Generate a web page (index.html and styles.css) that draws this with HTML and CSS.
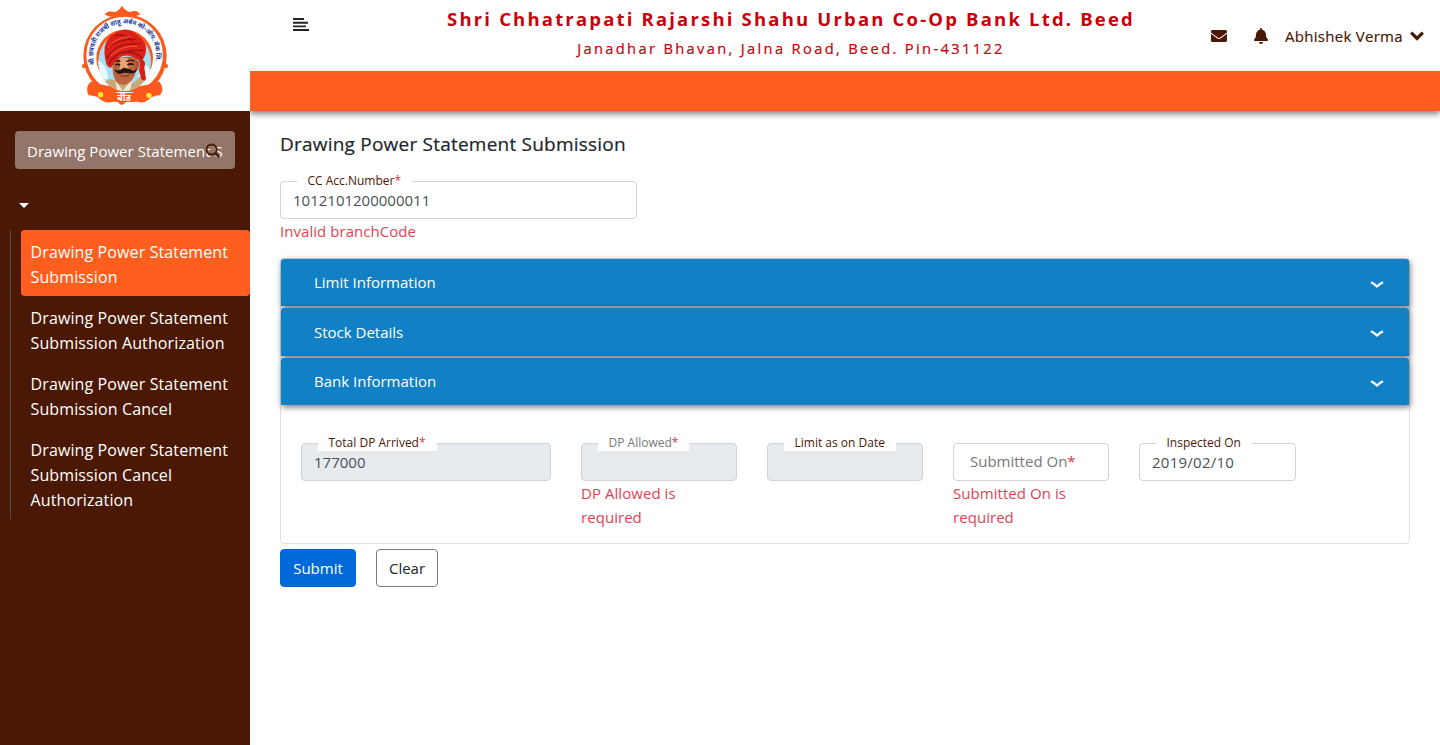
FILE: index.html
```html
<!DOCTYPE html>
<html lang="en">
<head>
<meta charset="utf-8">
<title>Drawing Power Statement Submission</title>
<link rel="stylesheet" href="styles.css">
</head>
<body>
<div class="app">
  <aside class="sidebar">
    <div class="brand">
      <svg class="logo" viewBox="0 0 330 336" width="110" height="112">
        <g fill="#fb5a1c">
          <path d="M104 44 Q112 30 134 36 Q148 32 156 17 Q164 32 180 36 Q204 28 210 44 L190 50 H122Z"/>
          <circle cx="165" cy="168" r="125"/>
          <path d="M62 245 Q44 262 56 286 Q84 288 90 298 Q106 312 130 305 L144 306 Q154 324 168 306 L202 305 Q222 312 238 297 Q250 286 270 286 Q285 265 268 245Z"/>
          <circle cx="43" cy="198" r="7"/><circle cx="287" cy="198" r="7"/>
        </g>
        <circle cx="164" cy="165" r="115" fill="#fff"/>
        <path d="M62 246Q164 276 268 246L270 276H60Z" fill="#fb5a1c"/>
        <circle cx="164" cy="174" r="85" fill="#fb5a1c"/>
        <clipPath id="portrait"><ellipse cx="164" cy="185" rx="79" ry="88"/></clipPath>
        <g clip-path="url(#portrait)">
          <path d="M70 90H260V280H70Z" fill="#a5dff6"/>
          <path d="M80 180Q110 190 115 235L80 245ZM215 190Q245 200 246 230L205 230Z" fill="#e9f8fd"/>
          <path d="M75 280V258L120 237L145 244L190 250L210 230L260 252V280Z" fill="#c9a878"/>
          <path d="M136 240L158 272L188 236L178 280H142Z" fill="#f4e9d9"/>
          <path d="M128 174Q124 230 142 249Q164 263 186 241Q203 220 201 168Z" fill="#b9653d"/>
          <path d="M149 174H173L177 214H149Z" fill="#e8a476"/>
          <path d="M198 183Q212 180 207 199Q202 218 193 214" fill="#ac512f"/>
          <path d="M134 184Q142 179 151 185M169 185Q181 177 194 184" fill="none" stroke="#3d1b16" stroke-width="5"/>
          <path d="M136 195Q143 190 150 196M172 195Q182 189 191 194" fill="none" stroke="#24100d" stroke-width="5"/>
          <path d="M138 210Q146 215 161 203Q180 205 191 213L201 207Q196 224 178 220Q163 216 150 222Q136 221 134 207Z" fill="#211512"/>
          <path d="M151 227Q163 232 177 226" fill="none" stroke="#91352c" stroke-width="4"/>
          <path d="M211 178Q231 180 223 203L229 245L214 238L207 212Z" fill="#dc1d13"/>
        </g>
        <path d="M109 192Q98 150 108 128Q120 98 159 89Q185 86 205 107Q230 121 228 151Q227 172 211 187Q189 160 157 168Q140 174 123 204Q111 200 109 192Z" fill="#dd2118"/>
        <path d="M110 150Q134 118 199 117M110 176Q137 125 211 132M117 192Q136 147 219 151M127 178Q165 134 217 174M134 108Q156 97 188 122" fill="none" stroke="#94110f" stroke-width="3.500"/>
        <path d="M113 145Q138 111 182 110M120 169Q155 134 203 139" fill="none" stroke="#ff5a3b" stroke-width="3"/>
        <path id="nameArc" d="M74.300 193A94 94 0 1 1 253.700 193" fill="none"/>
        <text class="logo-name"><textPath href="#nameArc" textLength="342" lengthAdjust="spacingAndGlyphs">श्री छत्रपती राजर्षी शाहू अर्बन को-ऑप. बँक लि.</textPath></text>
        <circle cx="92" cy="284" r="8" fill="#ffe92d"/><circle cx="237" cy="286" r="8" fill="#ffe92d"/>
        <text class="logo-city" x="162" y="302" text-anchor="middle">बीड</text>
      </svg>
    </div>
    <div class="search">
      <div class="search-text">Drawing Power Statement S</div>
      <svg class="search-icon" viewBox="0 0 16 16" width="16" height="16"><circle cx="6.6" cy="6.6" r="5" fill="none" stroke="#4a1805" stroke-width="2"/><path d="M10.4 10.4L14.2 14.2" stroke="#4a1805" stroke-width="2.4"/></svg>
    </div>
    <div class="caret"></div>
    <nav class="menu">
      <a class="item active">Drawing Power Statement<br>Submission</a>
      <a class="item">Drawing Power Statement<br>Submission Authorization</a>
      <a class="item">Drawing Power Statement<br>Submission Cancel</a>
      <a class="item">Drawing Power Statement<br>Submission Cancel<br>Authorization</a>
    </nav>
  </aside>
  <div class="main">
    <header class="topbar">
      <svg class="burger" viewBox="0 0 16 13" width="16" height="13" fill="#212529"><path d="M0 0H11V2H0ZM0 3.7H15V5.7H0ZM0 7.4H13V9.2H0ZM0 11H16V13H0Z"/></svg>
      <div class="bank">
        <div class="bank-name">Shri Chhatrapati Rajarshi Shahu Urban Co-Op Bank Ltd. Beed</div>
        <div class="bank-address">Janadhar Bhavan, Jalna Road, Beed. Pin-431122</div>
      </div>
      <div class="user">
        <svg class="mail" viewBox="0 0 512 384" width="16" height="12" fill="#4a1805"><path d="M502.300 126.800c3.900-3.100 9.700-.2 9.700 4.700V336c0 26.500-21.500 48-48 48H48c-26.500 0-48-21.500-48-48V131.600c0-5 5.700-7.800 9.700-4.700 22.400 17.400 52.100 39.500 154.100 113.600 21.100 15.400 56.700 47.800 92.200 47.600 35.700.3 72-32.800 92.300-47.600 102-74.100 131.600-96.300 154-113.700zM256 256c23.200.4 56.600-29.200 73.400-41.400 132.700-96.300 142.800-104.700 173.400-128.700 5.800-4.500 9.200-11.500 9.200-18.900V48c0-26.500-21.500-48-48-48H48C21.500 0 0 21.500 0 48v19c0 7.400 3.400 14.300 9.200 18.900 30.600 23.900 40.700 32.400 173.400 128.700 16.800 12.200 50.200 41.800 73.400 41.400z"/></svg>
        <svg class="bell" viewBox="0 0 448 512" width="14" height="16" fill="#4a1805"><path d="M224 512c35.320 0 63.970-28.650 63.970-64H160.030c0 35.350 28.650 64 63.970 64zm215.390-149.710c-19.320-20.760-55.470-51.990-55.470-154.290 0-77.700-54.480-139.900-127.940-155.160V32c0-17.670-14.320-32-31.980-32s-31.980 14.330-31.980 32v20.840C118.560 68.100 64.080 130.300 64.080 208c0 102.300-36.150 133.530-55.470 154.290-6 6.450-8.660 14.160-8.610 21.710.11 16.400 12.980 32 32.100 32h383.800c19.120 0 32-15.600 32.100-32 .05-7.550-2.610-15.270-8.610-21.710z"/></svg>
        <span class="user-name">Abhishek Verma</span>
        <svg class="down" viewBox="0 0 14 10" width="14" height="10"><path d="M1.200 1.600L7 7.400L12.800 1.600" fill="none" stroke="#4a1805" stroke-width="3.200"/></svg>
      </div>
    </header>
    <div class="strip"></div>
    <main class="content">
      <h1 class="title">Drawing Power Statement Submission</h1>
      <div class="field account">
        <div class="box value">1012101200000011</div>
        <label class="label">CC Acc.Number<i>*</i></label>
        <div class="error">Invalid branchCode</div>
      </div>
      <section class="accordion">
        <div class="bar"><span>Limit Information</span><svg viewBox="0 0 14 8" width="14" height="8"><path d="M1 1.200Q4 2.500 7 5.500Q10 2.500 13 1.200" fill="none" stroke="#fff" stroke-width="2.200"/></svg></div>
        <div class="bar second"><span>Stock Details</span><svg viewBox="0 0 14 8" width="14" height="8"><path d="M1 1.200Q4 2.500 7 5.500Q10 2.500 13 1.200" fill="none" stroke="#fff" stroke-width="2.200"/></svg></div>
        <div class="bar"><span>Bank Information</span><svg viewBox="0 0 14 8" width="14" height="8"><path d="M1 1.200Q4 2.500 7 5.500Q10 2.500 13 1.200" fill="none" stroke="#fff" stroke-width="2.200"/></svg></div>
        <div class="panel">
          <div class="field wide"><div class="box off value">177000</div><label class="label">Total DP Arrived<i>*</i></label></div>
          <div class="field"><div class="box off"></div><label class="label muted">DP Allowed<i>*</i></label><div class="error">DP Allowed is<br>required</div></div>
          <div class="field"><div class="box off"></div><label class="label">Limit as on Date</label></div>
          <div class="field"><div class="box placeholder"><span>Submitted On</span><i>*</i></div><div class="error">Submitted On is<br>required</div></div>
          <div class="field last"><div class="box value v-date">2019/02/10</div><label class="label">Inspected On</label></div>
        </div>
      </section>
      <div class="actions"><button class="btn submit">Submit</button><button class="btn clear">Clear</button></div>
    </main>
  </div>
</div>
</body>
</html>
```
FILE: styles.css
```css
* { box-sizing: border-box; }
body { margin: 0; font-family: "Segoe UI", "Open Sans", "Noto Sans", sans-serif; font-size: 15px; color: #212529; background: #fff; }
i { font-style: normal; color: #dc3545; }
svg { display: block; }
.app { display: flex; height: 745px; overflow: hidden; }
.sidebar { position: relative; z-index: 1; width: 250px; flex: none; background: #4a1805; color: #fff; }
.brand { height: 111px; background: #fff; padding-left: 70px; overflow: hidden; }
.logo-name { font: 700 20px "Noto Sans Devanagari", "Noto Sans", sans-serif; fill: #233b9b; }
.logo-city { font: 700 28px "Noto Sans Devanagari", "Noto Sans", sans-serif; fill: #fff; }
.search { position: relative; margin: 20px 15px 0; height: 38px; padding: 0 0 0 12px; border-radius: 4px; background: #947569; }
.search-text { white-space: nowrap; line-height: 40px; letter-spacing: 0.04px; }
.search-icon { position: absolute; left: 190px; top: 12px; }
.caret { margin: 34px 0 0 19px; width: 0; height: 0; border: 5.500px solid transparent; border-top: 5px solid #fff; border-bottom: 0; }
.menu { margin: 22px 0 0 10px; padding-left: 10px; border-left: 1px solid #4d4d4d; }
.item { display: block; padding: 10px 0 6px 9.500px; line-height: 25px; font-size: 16px; letter-spacing: 0.12px; white-space: nowrap; border-radius: 4px; }
.active { background: #ff5f1e; }
.main { flex: 1; min-width: 0; }
.topbar { display: flex; height: 71px; padding: 0 16px 0 43px; }
.burger { margin-top: 18px; }
.bank { flex: 1; display: flex; flex-direction: column; align-items: center; padding-left: 122px; color: #c80009; white-space: nowrap; }
.bank-name { font-size: 18.500px; font-weight: 700; line-height: 26px; margin-top: 6px; letter-spacing: 2.180px; }
.bank-address { font-size: 14.700px; line-height: 20px; margin-top: 6px; letter-spacing: 2.330px; -webkit-text-stroke: 0.2px; }
.user { display: flex; flex: none; align-items: center; width: 213px; margin-left: 60px; color: #4a1805; white-space: nowrap; }
.bell { margin-left: 27px; }
.user-name { margin-left: 17px; width: 125px; letter-spacing: 0.28px; -webkit-text-stroke: 0.2px; }
.strip { height: 40px; background: #ff5f1e; box-shadow: 0 3px 6px rgba(0,0,0,.5); }
.content { padding: 20px 30px; }
.title { margin: 0; height: 26px; line-height: 26px; font-size: 19px; font-weight: 500; letter-spacing: 0.22px; white-space: nowrap; -webkit-text-stroke: 0.2px; }
.field { position: relative; width: 156px; }
.account { width: 357px; height: 77px; margin-top: 24px; }
.box { height: 38px; border: 1px solid #ced4da; border-radius: 4px; background: #fff; }
.off { background: #e8ebee; }
.value { padding-left: 12px; line-height: 36px; color: #495057; white-space: nowrap; }
.v-date { letter-spacing: 0.25px; }
.label { position: absolute; height: 16px; line-height: 15px; top: -8px; left: 16.500px; padding: 0 11px; background: #fff; font-size: 12px; color: #4a1805; white-space: nowrap; }
.muted { color: #777; }
.error { line-height: 24px; color: #dd4554; letter-spacing: 0.05px; white-space: nowrap; }
.accordion { border: 1px solid #dfdfdf; border-radius: 4px; height: 286px; }
.bar { display: flex; justify-content: space-between; align-items: center; height: 47px; margin-bottom: 2px; padding: 0 25px 2px 33px; color: #fff; background: #1280c4; border-radius: 3px 3px 0 0; box-shadow: 1px 2px 6px rgba(0,0,0,.55); }
.bar svg { margin-top: 7px; }
.second { height: 48px; padding-bottom: 0; }
.second svg { margin-top: 4px; }
.panel { display: flex; gap: 30px; padding: 36px 20px 0; }
.wide { width: 250px; }
.last { width: 157px; }
.placeholder { padding-left: 16px; line-height: 34px; color: #777; white-space: nowrap; }
.actions { display: flex; gap: 20px; margin-top: 5px; }
.btn { height: 38px; padding: 0; border-radius: 4px; font: inherit; }
.submit { width: 76px; border: 1px solid #0069d9; background: #0069d9; color: #fff; }
.clear { width: 62px; border: 1px solid #777; background: #fff; color: #212529; }
```
